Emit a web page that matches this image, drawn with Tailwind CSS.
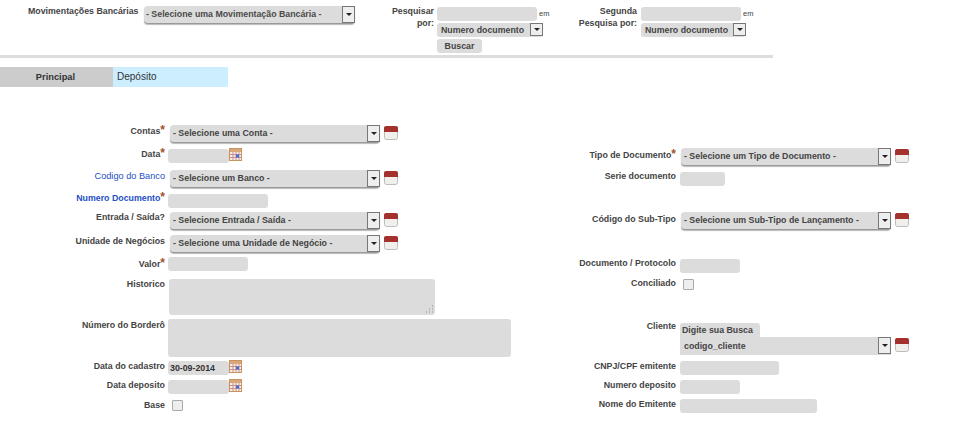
<!DOCTYPE html>
<html lang="pt-BR">
<head>
    <meta charset="UTF-8">
    <title>Movimentações Bancárias</title>
    <script src="https://cdn.jsdelivr.net/npm/@tailwindcss/browser@4"></script>
</head>
<body class="bg-white font-['Liberation_Sans',Arial,sans-serif] text-[8.8px] font-bold text-[#444] overflow-hidden">
    <svg class="hidden">
        <symbol id="add" viewBox="0 0 14 14">
            <rect x="0.5" y="0.5" width="13" height="13" rx="2" fill="#f1efec" stroke="#bdbdbd"/>
            <path d="M0 6V2a2 2 0 0 1 2-2h10a2 2 0 0 1 2 2v4z" fill="#a5312f"/>
        </symbol>
        <symbol id="cal" viewBox="0 0 13 13">
            <rect x="0.5" y="0.5" width="12" height="12" fill="#f6eee2" stroke="#c9925f"/>
            <rect x="1" y="1" width="11" height="3" fill="#d9a77c"/>
            <path d="M1 6.500h11M1 9.500h11M4 4v8M7 4v8M10 4v8" stroke="#c98f8f" stroke-width="1"/>
            <rect x="7" y="6.500" width="3" height="3" fill="#3b6fd8"/>
        </symbol>
    </svg>

    <!-- topo -->
    <div class="flex w-[773px] h-[55px]">
        <div class="w-[110px] ml-[28px] pt-[5px] leading-[12px] whitespace-nowrap">Movimentações Bancárias</div>
        <div class="ml-[6px] mt-[6px] w-[211px] h-[18px] flex justify-between bg-[#dcdcdc] rounded-[4px] border-b border-[#999] shadow-[0_1px_1px_#bbb] pl-[2px] leading-[17px] text-[#4a4a4a]">
            - Selecione uma Movimentação Bancária -
            <span class="w-[13px] h-[17px] bg-[#eee] border border-[#777] flex items-center justify-center"><span class="border-x-[3px] border-t-[3px] border-x-transparent border-t-[#222]"></span></span>
        </div>
        <div class="w-[79px] pt-[5px] leading-[12px] text-right">Pesquisar<br>por:</div>
        <div class="ml-[3px] pt-[7px] w-[122px]">
            <div class="flex items-center">
                <input class="w-[100px] h-[14px] bg-[#dcdcdc] rounded-[3px]">
                <span class="ml-[2px] text-[7.500px] font-normal">em</span>
            </div>
            <div class="mt-[2px] w-[106px] h-[14px] bg-[#dcdcdc] rounded-[3px] pl-[4px] leading-[14px] flex justify-between whitespace-nowrap">
                Numero documento
                <span class="w-[13px] h-[13px] bg-[#eee] border border-[#777] flex items-center justify-center"><span class="border-x-[3px] border-t-[3px] border-x-transparent border-t-[#222]"></span></span>
            </div>
            <button class="block mt-[2px] w-[45px] h-[14px] bg-[#dcdcdc] rounded-[3px] leading-[14px] text-center">Buscar</button>
        </div>
        <div class="w-[78px] pt-[5px] leading-[12px] text-right">Segunda<br>Pesquisa por:</div>
        <div class="ml-[4px] pt-[7px] w-[122px]">
            <div class="flex items-center">
                <input class="w-[100px] h-[14px] bg-[#dcdcdc] rounded-[3px]">
                <span class="ml-[2px] text-[7.500px] font-normal">em</span>
            </div>
            <div class="mt-[2px] w-[105px] h-[14px] bg-[#dcdcdc] rounded-[3px] pl-[4px] leading-[14px] flex justify-between whitespace-nowrap">
                Numero documento
                <span class="w-[13px] h-[13px] bg-[#eee] border border-[#777] flex items-center justify-center"><span class="border-x-[3px] border-t-[3px] border-x-transparent border-t-[#222]"></span></span>
            </div>
        </div>
    </div>
    <div class="w-[773px] h-[3px] bg-[#ddd]"></div>

    <!-- abas -->
    <div class="flex mt-[9px] h-[20px] leading-[20px]">
        <div class="w-[111px] pr-[0px] bg-[#ccc] text-center text-[#333] text-[9.300px]">Principal</div>
        <div class="w-[2px] bg-[#ccc]"></div>
        <div class="w-[115px] bg-[#cceeff] pl-[4px] font-normal text-[#333] text-[10px]">Depósito</div>
    </div>

    <div class="flex">
        <!-- coluna esquerda -->
        <div class="w-[515px] pt-[38px]">
            <div class="flex h-[24px]">
                <div class="w-[165px] text-right leading-[12px]">Contas<span class="text-[#a0522d] text-[12px] leading-[10px]">*</span></div>
                <div class="ml-[5px] w-[210px] h-[18px] flex justify-between bg-[#dcdcdc] rounded-[4px] border-b border-[#999] shadow-[0_1px_1px_#bbb] pl-[3px] leading-[17px]">
                    - Selecione uma Conta -
                    <span class="w-[13px] h-[17px] bg-[#eee] border border-[#777] flex items-center justify-center"><span class="border-x-[3px] border-t-[3px] border-x-transparent border-t-[#222]"></span></span>
                </div>
                <svg class="ml-[4px] mt-[1px] w-[14px] h-[14px]"><use href="#add"/></svg>
            </div>
            <div class="flex h-[21px]">
                <div class="w-[165px] text-right leading-[12px] -mt-[1px]">Data<span class="text-[#a0522d] text-[12px] leading-[10px]">*</span></div>
                <input class="ml-[3px] w-[61px] h-[14px] bg-[#dcdcdc] rounded-[3px]">
                <svg class="-mt-[1px] w-[13px] h-[13px]"><use href="#cal"/></svg>
            </div>
            <div class="flex h-[24px]">
                <div class="w-[165px] text-right leading-[12px] text-[#1f4fc4] font-normal text-[9.200px]">Codigo do Banco</div>
                <div class="ml-[5px] w-[210px] h-[18px] flex justify-between bg-[#dcdcdc] rounded-[4px] border-b border-[#999] shadow-[0_1px_1px_#bbb] pl-[3px] leading-[17px]">
                    - Selecione um Banco -
                    <span class="w-[13px] h-[17px] bg-[#eee] border border-[#777] flex items-center justify-center"><span class="border-x-[3px] border-t-[3px] border-x-transparent border-t-[#222]"></span></span>
                </div>
                <svg class="ml-[4px] mt-[1px] w-[14px] h-[14px]"><use href="#add"/></svg>
            </div>
            <div class="flex h-[18px]">
                <div class="w-[165px] text-right leading-[12px] text-[#1f4fc4] -mt-[2px]">Numero Documento<span class="text-[#a0522d] text-[12px] leading-[10px]">*</span></div>
                <input class="ml-[3px] w-[100px] h-[14px] bg-[#dcdcdc] rounded-[3px]">
            </div>
            <div class="flex h-[23px]">
                <div class="w-[165px] text-right leading-[12px] -mt-[1px]">Entrada / Saída?</div>
                <div class="ml-[5px] w-[210px] h-[18px] flex justify-between bg-[#dcdcdc] rounded-[4px] border-b border-[#999] shadow-[0_1px_1px_#bbb] pl-[3px] leading-[17px]">
                    - Selecione Entrada / Saída -
                    <span class="w-[13px] h-[17px] bg-[#eee] border border-[#777] flex items-center justify-center"><span class="border-x-[3px] border-t-[3px] border-x-transparent border-t-[#222]"></span></span>
                </div>
                <svg class="ml-[4px] mt-[1px] w-[14px] h-[14px]"><use href="#add"/></svg>
            </div>
            <div class="flex h-[22px]">
                <div class="w-[165px] text-right leading-[12px]">Unidade de Negócios</div>
                <div class="ml-[5px] w-[210px] h-[18px] flex justify-between bg-[#dcdcdc] rounded-[4px] border-b border-[#999] shadow-[0_1px_1px_#bbb] pl-[3px] leading-[17px]">
                    - Selecione uma Unidade de Negócio -
                    <span class="w-[13px] h-[17px] bg-[#eee] border border-[#777] flex items-center justify-center"><span class="border-x-[3px] border-t-[3px] border-x-transparent border-t-[#222]"></span></span>
                </div>
                <svg class="ml-[4px] mt-[1px] w-[14px] h-[14px]"><use href="#add"/></svg>
            </div>
            <div class="flex h-[22px]">
                <div class="w-[165px] text-right leading-[12px] mt-[1px]">Valor<span class="text-[#a0522d] text-[12px] leading-[10px]">*</span></div>
                <input class="ml-[3px] w-[80px] h-[14px] bg-[#dcdcdc] rounded-[3px]">
            </div>
            <div class="flex h-[40px]">
                <div class="w-[165px] text-right leading-[12px] -mt-[1px]">Historico</div>
                <div class="relative ml-[4px] w-[266px] h-[36px]">
                    <textarea class="block w-full h-full resize-none bg-[#dcdcdc] rounded-[3px]"></textarea>
                    <svg class="absolute right-[1px] bottom-[1px] w-[9px] h-[9px]" viewBox="0 0 9 9"><path d="M7 1h1M4 4h1M7 4h1M1 7h1M4 7h1M7 7h1" stroke="#888" stroke-width="1"/></svg>
                </div>
            </div>
            <div class="flex h-[42px]">
                <div class="w-[165px] text-right leading-[12px]">Número do Borderô</div>
                <div class="ml-[3px] w-[343px] h-[38px] bg-[#dcdcdc] rounded-[3px]"></div>
            </div>
            <div class="flex h-[19px]">
                <div class="w-[165px] text-right leading-[12px] -mt-[1px]">Data do cadastro</div>
                <input value="30-09-2014" class="ml-[3px] w-[61px] h-[14px] bg-[#dcdcdc] rounded-[3px] pl-[2px] text-[#333]">
                <svg class="-mt-[1px] w-[13px] h-[13px]"><use href="#cal"/></svg>
            </div>
            <div class="flex h-[20px]">
                <div class="w-[165px] text-right leading-[12px] -mt-[1px]">Data deposito</div>
                <input class="ml-[3px] w-[61px] h-[14px] bg-[#dcdcdc] rounded-[3px]">
                <svg class="-mt-[1px] w-[13px] h-[13px]"><use href="#cal"/></svg>
            </div>
            <div class="flex">
                <div class="w-[165px] text-right leading-[12px] -mt-[1px]">Base</div>
                <input type="checkbox" class="appearance-none ml-[7px] w-[11px] h-[11px] bg-[#eee] border border-[#aaa] rounded-[1px]">
            </div>
        </div>

        <!-- coluna direita -->
        <div class="pt-[61px]">
            <div class="flex h-[24px]">
                <div class="w-[161px] text-right leading-[12px] pt-[1px]">Tipo de Documento<span class="text-[#a0522d] text-[12px] leading-[10px]">*</span></div>
                <div class="ml-[5px] w-[210px] h-[18px] flex justify-between bg-[#dcdcdc] rounded-[4px] border-b border-[#999] shadow-[0_1px_1px_#bbb] pl-[3px] leading-[17px]">
                    - Selecione um Tipo de Documento -
                    <span class="w-[13px] h-[17px] bg-[#eee] border border-[#777] flex items-center justify-center"><span class="border-x-[3px] border-t-[3px] border-x-transparent border-t-[#222]"></span></span>
                </div>
                <svg class="ml-[4px] mt-[1px] w-[14px] h-[14px]"><use href="#add"/></svg>
            </div>
            <div class="flex h-[40px]">
                <div class="w-[161px] text-right leading-[12px] -mt-[2px]">Serie documento</div>
                <input class="ml-[4px] w-[45px] h-[14px] bg-[#dcdcdc] rounded-[3px]">
            </div>
            <div class="flex h-[47px]">
                <div class="w-[161px] text-right leading-[12px] mt-[1px]">Código do Sub-Tipo</div>
                <div class="ml-[5px] w-[210px] h-[18px] flex justify-between bg-[#dcdcdc] rounded-[4px] border-b border-[#999] shadow-[0_1px_1px_#bbb] pl-[3px] leading-[17px]">
                    - Selecione um Sub-Tipo de Lançamento -
                    <span class="w-[13px] h-[17px] bg-[#eee] border border-[#777] flex items-center justify-center"><span class="border-x-[3px] border-t-[3px] border-x-transparent border-t-[#222]"></span></span>
                </div>
                <svg class="ml-[4px] mt-[1px] w-[14px] h-[14px]"><use href="#add"/></svg>
            </div>
            <div class="flex h-[20px]">
                <div class="w-[161px] text-right leading-[12px] -mt-[2px]">Documento / Protocolo</div>
                <input class="ml-[4px] w-[60px] h-[14px] bg-[#dcdcdc] rounded-[3px]">
            </div>
            <div class="flex h-[44px]">
                <div class="w-[161px] text-right leading-[12px] -mt-[2px]">Conciliado</div>
                <input type="checkbox" class="appearance-none ml-[7px] w-[11px] h-[11px] bg-[#eee] border border-[#aaa] rounded-[1px]">
            </div>
            <div class="flex h-[38px]">
                <div class="w-[161px] text-right leading-[12px] -mt-[3px]">Cliente</div>
                <div class="ml-[4px]">
                    <div class="w-[80px] h-[14px] bg-[#dcdcdc] rounded-t-[3px] pl-[2px] leading-[14px] whitespace-nowrap">Digite sua Busca</div>
                    <div class="w-[211px] h-[18px] flex justify-between bg-[#dcdcdc] pl-[4px] leading-[18px]">
                        codigo_cliente
                        <span class="w-[13px] h-[17px] bg-[#eee] border border-[#777] flex items-center justify-center"><span class="border-x-[3px] border-t-[3px] border-x-transparent border-t-[#222]"></span></span>
                    </div>
                </div>
                <svg class="ml-[4px] mt-[15px] w-[14px] h-[14px]"><use href="#add"/></svg>
            </div>
            <div class="flex h-[19px]">
                <div class="w-[161px] text-right leading-[12px] -mt-[1px]">CNPJ/CPF emitente</div>
                <input class="ml-[4px] w-[99px] h-[14px] bg-[#dcdcdc] rounded-[3px]">
            </div>
            <div class="flex h-[19px]">
                <div class="w-[161px] text-right leading-[12px] -mt-[1px]">Numero deposito</div>
                <input class="ml-[4px] w-[60px] h-[14px] bg-[#dcdcdc] rounded-[3px]">
            </div>
            <div class="flex">
                <div class="w-[161px] text-right leading-[12px] -mt-[1px]">Nome do Emitente</div>
                <input class="ml-[4px] w-[137px] h-[14px] bg-[#dcdcdc] rounded-[3px]">
            </div>
        </div>
    </div>
</body>
</html>
